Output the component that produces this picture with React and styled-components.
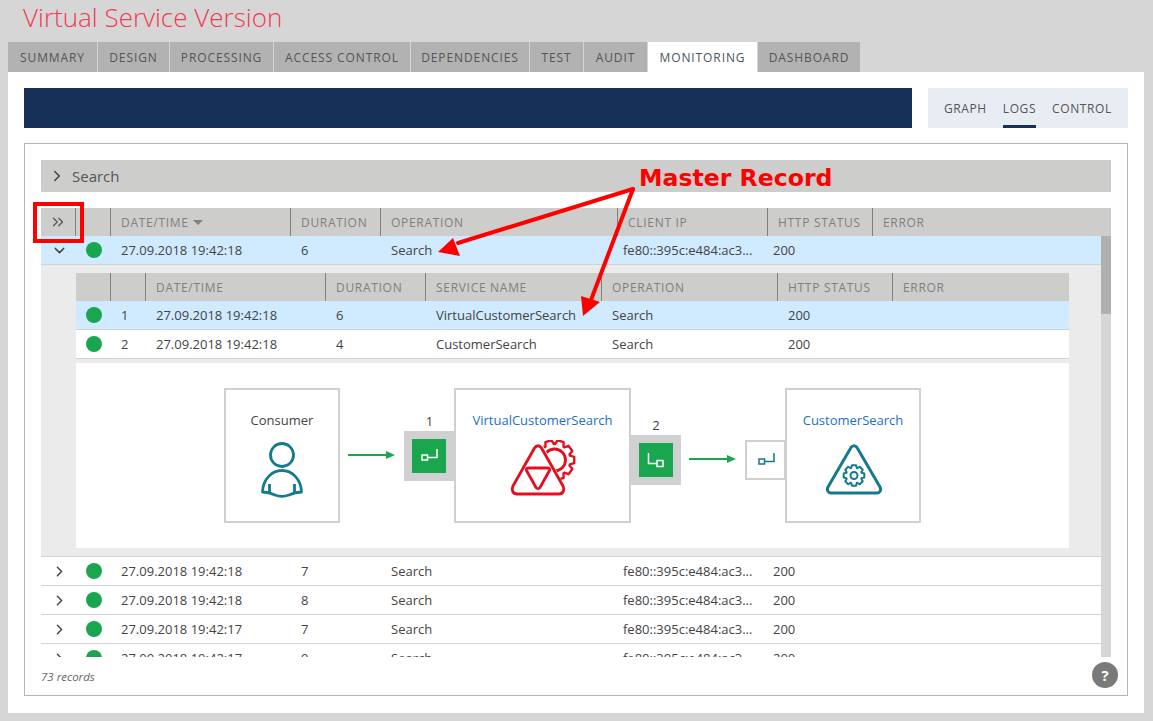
import React from "react";
import styled, { createGlobalStyle } from "styled-components";
import { ChevronRight, ChevronDown, ChevronsRight } from "lucide-react";

const GlobalStyle = createGlobalStyle`
  html, body {
    margin: 0;
    padding: 0;
    background: #d6d6d6;
    font-family: "Open Sans", "Noto Sans", sans-serif;
    color: #444;
  }
  * { box-sizing: border-box; }
`;

const TABS = [
  { label: "Summary", width: 89 },
  { label: "Design", width: 71 },
  { label: "Processing", width: 103 },
  { label: "Access Control", width: 136 },
  { label: "Dependencies", width: 118 },
  { label: "Test", width: 53 },
  { label: "Audit", width: 63 },
  { label: "Monitoring", width: 109, active: true },
  { label: "Dashboard", width: 102 },
];

const OUTER_HEAD = "35px 35px 180px 90px 237px 150px 105px 1fr";
const OUTER_ROW = "35px 35px 180px 90px 232px 150px 1fr";
const INNER_COLS = "35px 35px 180px 100px 176px 176px 115px 1fr";

const RECORDS = [
  ["27.09.2018 19:42:18", "7"],
  ["27.09.2018 19:42:18", "8"],
  ["27.09.2018 19:42:17", "7"],
  ["27.09.2018 19:42:17", "9"],
];

const Page = styled.div`
  position: relative;
  width: 1153px;
  height: 721px;
  overflow: hidden;
`;

const Title = styled.h1`
  margin: 0;
  height: 42px;
  padding-left: 23px;
  font-size: 26px;
  line-height: 34px;
  font-weight: 300;
  color: #f23a50;
`;

const TabBar = styled.div`
  display: flex;
  gap: 1px;
  height: 30px;
  padding-left: 8px;
`;

const Tab = styled.div`
  width: ${(p) => p.$width}px;
  display: flex;
  align-items: center;
  justify-content: center;
  font-size: 12px;
  letter-spacing: 0.9px;
  text-transform: uppercase;
  background: ${(p) => (p.$active ? "#fff" : "#b2b2b2")};
  color: ${(p) => (p.$active ? "#4a5560" : "#555")};
`;

const Panel = styled.div`
  width: 1136px;
  height: 641px;
  margin-left: 8px;
  padding: 16px;
  background: #fff;
`;

const Toolbar = styled.div`
  display: flex;
  gap: 16px;
  height: 40px;
`;

const NavyBar = styled.div`
  flex: 1;
  background: #163058;
`;

const ViewTabs = styled.div`
  width: 200px;
  display: flex;
  gap: 16px;
  padding-left: 16px;
  background: #e8ecf3;
`;

const ViewTab = styled.div`
  height: 40px;
  display: flex;
  align-items: center;
  font-size: 12px;
  letter-spacing: 0.6px;
  text-transform: uppercase;
  color: #555;
  border-bottom: 3px solid ${(p) => (p.$active ? "#163058" : "transparent")};
  padding-top: 3px;
`;

const LogBox = styled.div`
  position: relative;
  height: 553px;
  margin-top: 15px;
  padding: 16px 16px 0;
  border: 1px solid #b5b5b5;
`;

const SearchBar = styled.div`
  height: 32px;
  display: flex;
  align-items: center;
  gap: 6px;
  padding-left: 7px;
  margin-bottom: 16px;
  background: #cdcdcb;
  font-size: 15px;
  color: #555;
  svg {
    color: #444;
  }
`;

const HeadRow = styled.div`
  display: grid;
  grid-template-columns: ${(p) => p.$cols};
  height: 28px;
  background: #cdcdcb;
`;

const HeadCell = styled.div`
  display: flex;
  align-items: center;
  gap: 4px;
  padding-left: 10px;
  font-size: 12px;
  letter-spacing: 0.7px;
  text-transform: uppercase;
  color: #808080;
  border-right: ${(p) => (p.$last ? "none" : "1px solid #808080")};
`;

const ExpandCell = styled(HeadCell)`
  justify-content: center;
  padding: 0;
  color: #555;
`;

const SortCaret = styled.span`
  width: 0;
  height: 0;
  border-left: 5px solid transparent;
  border-right: 5px solid transparent;
  border-top: 5px solid #808080;
`;

const ScrollArea = styled.div`
  display: flex;
  height: 421px;
`;

const RowList = styled.div`
  flex: 1;
  min-width: 0;
  overflow: hidden;
`;

const ScrollTrack = styled.div`
  width: 10px;
  background: #d6d6d6;
`;

const ScrollThumb = styled.div`
  height: 78px;
  background: #b0b0b0;
`;

const Row = styled.div`
  display: grid;
  grid-template-columns: ${(p) => p.$cols};
  flex: none;
  height: 29px;
  align-items: center;
  background: ${(p) => (p.$selected ? "#d0eaff" : "#fff")};
  border-bottom: 1px solid #d2d2d2;
  font-size: 13px;
  color: #444;
`;

const Cell = styled.div`
  padding-left: 10px;
  white-space: nowrap;
`;

const CenterCell = styled.div`
  display: flex;
  justify-content: center;
  align-items: center;
  color: #444;
`;

const ToggleCell = styled(CenterCell)`
  padding-left: 1px;
`;

const Dot = styled.span`
  width: 16px;
  height: 16px;
  border-radius: 50%;
  background: #1aa64f;
`;

const Expanded = styled.div`
  height: 292px;
  padding: 8px 32px 0 35px;
  background: #ebebeb;
  border-bottom: 1px solid #d2d2d2;
`;

const Canvas = styled.div`
  display: flex;
  align-items: flex-start;
  height: 185px;
  margin-top: 4px;
  padding: 25px 0 0 148px;
  background: #fff;
`;

const Node = styled.div`
  flex: none;
  width: ${(p) => p.$width}px;
  height: 135px;
  display: flex;
  flex-direction: column;
  align-items: center;
  padding-top: 21px;
  border: 2px solid #d0d0d0;
  background: #fff;
  font-size: 13px;
  line-height: 18px;
  color: ${(p) => (p.$link ? "#1a6fd0" : "#444")};
`;

const NodeIcon = styled.svg`
  display: block;
  flex: none;
  margin-top: ${(p) => p.$top}px;
`;

const FlowArrow = styled.svg`
  flex: none;
  margin: ${(p) => p.$top}px 9px 0 8px;
`;

const Port = styled.div`
  flex: none;
  width: ${(p) => p.$width}px;
  margin-top: ${(p) => p.$top}px;
  margin-right: ${(p) => p.$overlap || 0}px;
  font-size: 13px;
  line-height: 20px;
  text-align: center;
  color: #444;
`;

const PortFrame = styled.div`
  height: 50px;
  padding: 8px;
  background: #d0d0d0;
`;

const PortFace = styled.div`
  width: 34px;
  height: 34px;
  background: #1aa64f;
`;

const TargetPort = styled.div`
  flex: none;
  width: 41px;
  height: 40px;
  margin: 52px -1px 0 0;
  display: flex;
  align-items: center;
  justify-content: center;
  border: 2px solid #d0d0d0;
  background: #fff;
`;

const Footer = styled.div`
  height: 39px;
  display: flex;
  align-items: center;
  font-size: 11.5px;
  font-style: italic;
  color: #666;
`;

const HelpButton = styled.div`
  position: absolute;
  right: 9px;
  bottom: 7px;
  width: 26px;
  height: 26px;
  display: flex;
  align-items: center;
  justify-content: center;
  border-radius: 50%;
  background: #7a7a7a;
  color: #fff;
  font-size: 15px;
  font-weight: 700;
`;

const CalloutLabel = styled.div`
  position: absolute;
  left: 639px;
  top: 163px;
  font-family: "DejaVu Sans", sans-serif;
  font-size: 23.6px;
  line-height: 30px;
  font-weight: 700;
  color: #f00;
  white-space: nowrap;
`;

const CalloutArrows = styled.svg`
  position: absolute;
  left: 430px;
  top: 180px;
  pointer-events: none;
`;

const CalloutBox = styled.div`
  position: absolute;
  left: 33px;
  top: 202px;
  width: 51px;
  height: 41px;
  border: 4px solid #f00;
  pointer-events: none;
`;

// builds a toothed gear outline around cx,cy
function gearPath(cx, cy, outer, inner, teeth) {
  const step = (Math.PI * 2) / teeth;
  const pts = [];
  for (let i = 0; i < teeth; i++) {
    const a = i * step;
    [
      [-0.5, inner],
      [-0.28, outer],
      [0.28, outer],
      [0.5, inner],
    ].forEach(([f, r]) => {
      const t = a + f * step * 0.9;
      pts.push(`${(cx + Math.cos(t) * r).toFixed(2)} ${(cy + Math.sin(t) * r).toFixed(2)}`);
    });
  }
  return `M${pts.join("L")}Z`;
}

const TEAL = "#147a8e";
const RED = "#e30f1f";

function PersonIcon() {
  return (
    <NodeIcon $top={11} width="48" height="60" viewBox="0 0 48 60" fill="none" stroke={TEAL} strokeWidth="2.8">
      <circle cx="24" cy="15" r="11.5" />
      <path d="M4.500 52C5 39 14 30.500 24 30.500S43 39 43.500 52C38 52 35 53 31 55C27 56.500 21 56.500 17 55C13 53 10 52 4.500 52Z" strokeLinejoin="round" />
      <path d="M11.500 44V52.500M36.500 44V52.500" />
    </NodeIcon>
  );
}

function VirtualServiceIcon() {
  return (
    <NodeIcon $top={11} width="72" height="60" viewBox="0 0 72 60" fill="none" stroke={RED} strokeWidth="2.8" strokeLinejoin="round">
      <clipPath id="gearClip">
        <path d="M33 0L72 0L72 60L65 60Z" />
      </clipPath>
      <g clipPath="url(#gearClip)">
        <path d={gearPath(47.5, 20, 20, 16, 10)} strokeWidth="2.4" />
        <circle cx="47.500" cy="20" r="11" />
      </g>
      <path d="M27.500 8C29.500 5 32.500 5 34.500 8L56 46C58 50 56 54 52 54H10C6 54 4 50 6 46Z" />
      <path d="M21 28H41C42.500 28 43 29.500 42.500 30.500L33 47.500C32 49 30 49 29 47.500L19.500 30.500C19 29.500 19.500 28 21 28Z" />
    </NodeIcon>
  );
}

function ServiceIcon() {
  return (
    <NodeIcon $top={15} width="58" height="52" viewBox="0 0 58 52" fill="none" stroke={TEAL} strokeWidth="3" strokeLinejoin="round">
      <path d="M27 3.500C28.500 1 31.500 1 33 3.500L56 43C57.500 46 56 49 53 49H7C4 49 2.500 46 4 43Z" />
      <path d={gearPath(30, 31.5, 10.5, 8, 8)} strokeWidth="2" />
      <circle cx="30" cy="31.500" r="3.500" strokeWidth="2" />
    </NodeIcon>
  );
}

function RouteIcon({ flip, color = "#fff" }) {
  return flip ? (
    <svg width="34" height="34" viewBox="0 0 34 34" fill="none" stroke={color} strokeWidth="1.500">
      <path d="M9.500 10V20.500H18" />
      <rect x="18" y="17.500" width="6" height="6" />
    </svg>
  ) : (
    <svg width="34" height="34" viewBox="0 0 34 34" fill="none" stroke={color} strokeWidth="1.500">
      <path d="M15.500 18.500H25V10" />
      <rect x="10" y="16" width="5.500" height="5" />
    </svg>
  );
}

function Arrow({ top }) {
  return (
    <FlowArrow $top={top} width="47" height="10" viewBox="0 0 47 10">
      <path d="M0 5H38" stroke="#1aa64f" strokeWidth="2" />
      <path d="M38 1L47 5L38 9Z" fill="#1aa64f" />
    </FlowArrow>
  );
}

function ServiceGraph() {
  return (
    <Canvas>
      <Node $width={116}>
        Consumer
        <PersonIcon />
      </Node>
      <Arrow top={62} />
      <Port $width={51} $top={23} $overlap={-1}>
        1
        <PortFrame>
          <PortFace>
            <RouteIcon />
          </PortFace>
        </PortFrame>
      </Port>
      <Node $width={177} $link>
        VirtualCustomerSearch
        <VirtualServiceIcon />
      </Node>
      <Port $width={50} $top={27}>
        2
        <PortFrame>
          <PortFace>
            <RouteIcon flip />
          </PortFace>
        </PortFrame>
      </Port>
      <Arrow top={66} />
      <TargetPort>
        <RouteIcon color={TEAL} />
      </TargetPort>
      <Node $width={136} $link>
        CustomerSearch
        <ServiceIcon />
      </Node>
    </Canvas>
  );
}

function RecordRow({ time, duration, open }) {
  return (
    <Row $cols={OUTER_ROW} $selected={open}>
      <ToggleCell>
        {open ? <ChevronDown size={17} strokeWidth={2} /> : <ChevronRight size={17} strokeWidth={2} />}
      </ToggleCell>
      <CenterCell>
        <Dot />
      </CenterCell>
      <Cell>{time}</Cell>
      <Cell>{duration}</Cell>
      <Cell>Search</Cell>
      <Cell>fe80::395c:e484:ac3...</Cell>
      <Cell>200</Cell>
    </Row>
  );
}

function SubRow({ index, duration, name, selected }) {
  return (
    <Row $cols={INNER_COLS} $selected={selected}>
      <CenterCell>
        <Dot />
      </CenterCell>
      <Cell>{index}</Cell>
      <Cell>27.09.2018 19:42:18</Cell>
      <Cell>{duration}</Cell>
      <Cell>{name}</Cell>
      <Cell>Search</Cell>
      <Cell>200</Cell>
      <Cell />
    </Row>
  );
}

export default function App() {
  return (
    <Page>
      <GlobalStyle />
      <Title>Virtual Service Version</Title>
      <TabBar>
        {TABS.map((t) => (
          <Tab key={t.label} $width={t.width} $active={t.active}>
            {t.label}
          </Tab>
        ))}
      </TabBar>
      <Panel>
        <Toolbar>
          <NavyBar />
          <ViewTabs>
            <ViewTab>Graph</ViewTab>
            <ViewTab $active>Logs</ViewTab>
            <ViewTab>Control</ViewTab>
          </ViewTabs>
        </Toolbar>
        <LogBox>
          <SearchBar>
            <ChevronRight size={18} strokeWidth={2} />
            Search
          </SearchBar>
          <HeadRow $cols={OUTER_HEAD}>
            <ExpandCell>
              <ChevronsRight size={18} strokeWidth={1.6} />
            </ExpandCell>
            <HeadCell />
            <HeadCell>
              Date/Time
              <SortCaret />
            </HeadCell>
            <HeadCell>Duration</HeadCell>
            <HeadCell>Operation</HeadCell>
            <HeadCell>Client IP</HeadCell>
            <HeadCell>HTTP Status</HeadCell>
            <HeadCell $last>Error</HeadCell>
          </HeadRow>
          <ScrollArea>
            <RowList>
              <RecordRow time="27.09.2018 19:42:18" duration="6" open />
              <Expanded>
                <HeadRow $cols={INNER_COLS}>
                  <HeadCell />
                  <HeadCell />
                  <HeadCell>Date/Time</HeadCell>
                  <HeadCell>Duration</HeadCell>
                  <HeadCell>Service Name</HeadCell>
                  <HeadCell>Operation</HeadCell>
                  <HeadCell>HTTP Status</HeadCell>
                  <HeadCell $last>Error</HeadCell>
                </HeadRow>
                <SubRow index={1} duration="6" name="VirtualCustomerSearch" selected />
                <SubRow index={2} duration="4" name="CustomerSearch" />
                <ServiceGraph />
              </Expanded>
              {RECORDS.map(([time, duration], i) => (
                <RecordRow key={i} time={time} duration={duration} />
              ))}
            </RowList>
            <ScrollTrack>
              <ScrollThumb />
            </ScrollTrack>
          </ScrollArea>
          <Footer>73 records</Footer>
          <HelpButton>?</HelpButton>
        </LogBox>
      </Panel>
      <CalloutLabel>Master Record</CalloutLabel>
      <CalloutBox />
      <CalloutArrows width="210" height="140" viewBox="0 0 210 140" fill="#f00" stroke="none">
        <path d="M203 9L28 63" stroke="#f00" strokeWidth="4" strokeLinecap="round" />
        <path d="M8 72L23 58L30 76Z" />
        <path d="M203 9L161 120" stroke="#f00" strokeWidth="4" strokeLinecap="round" />
        <path d="M153 136L151 116L170 122Z" />
      </CalloutArrows>
    </Page>
  );
}
